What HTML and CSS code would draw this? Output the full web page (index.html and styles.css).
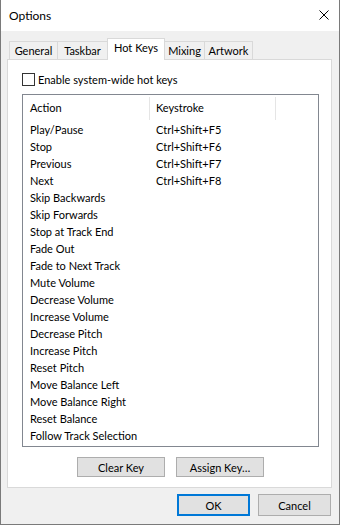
FILE: index.html
```html
<!DOCTYPE html>
<html lang="en">
<head>
    <meta charset="UTF-8">
    <meta name="viewport" content="width=device-width, initial-scale=1.0">
    <title>Options</title>
    <link rel="stylesheet" href="styles.css">
</head>
<body>
    <div class="window">
        <div class="titlebar">
            <span class="title">Options</span>
            <svg class="close" width="10" height="10" viewBox="0 0 10 10">
                <path d="M0.5 0.5 L9.5 9.5 M9.5 0.5 L0.5 9.5" stroke="#000" stroke-width="1" fill="none"/>
            </svg>
        </div>

        <div class="dialog">
            <div class="tabs">
                <div class="tab tab-general">General</div>
                <div class="tab tab-taskbar">Taskbar</div>
                <div class="tab tab-hotkeys active">Hot Keys</div>
                <div class="tab tab-mixing">Mixing</div>
                <div class="tab tab-artwork">Artwork</div>
            </div>

            <div class="panel">
                <label class="check">
                    <span class="check-box"></span>
                    <span>Enable system-wide hot keys</span>
                </label>

                <div class="listview">
                    <div class="lv-header">
                        <div class="lv-col">Action</div>
                        <div class="lv-col">Keystroke</div>
                        <div></div>
                    </div>
                    <div class="lv-rows" id="rows"></div>
                </div>

                <div class="panel-buttons">
                    <button class="btn">Clear Key</button>
                    <button class="btn">Assign Key…</button>
                </div>
            </div>

            <div class="footer">
                <button class="btn btn-dialog default">OK</button>
                <button class="btn btn-dialog">Cancel</button>
            </div>
        </div>
    </div>

    <script>
        const hotkeys = [
            ['Play/Pause', 'Ctrl+Shift+F5'],
            ['Stop', 'Ctrl+Shift+F6'],
            ['Previous', 'Ctrl+Shift+F7'],
            ['Next', 'Ctrl+Shift+F8'],
            ['Skip Backwards', ''],
            ['Skip Forwards', ''],
            ['Stop at Track End', ''],
            ['Fade Out', ''],
            ['Fade to Next Track', ''],
            ['Mute Volume', ''],
            ['Decrease Volume', ''],
            ['Increase Volume', ''],
            ['Decrease Pitch', ''],
            ['Increase Pitch', ''],
            ['Reset Pitch', ''],
            ['Move Balance Left', ''],
            ['Move Balance Right', ''],
            ['Reset Balance', ''],
            ['Follow Track Selection', '']
        ];

        const rows = document.getElementById('rows');
        hotkeys.forEach(([action, key]) => {
            const row = document.createElement('div');
            row.className = 'lv-row';
            row.innerHTML = `<span class="lv-action">${action}</span><span class="lv-key">${key}</span>`;
            rows.appendChild(row);
        });
    </script>
</body>
</html>
```

FILE: styles.css
```css
* {
    box-sizing: border-box;
    margin: 0;
    padding: 0;
}

body {
    font-family: Lato, "Noto Sans", sans-serif;
    font-size: 11px;
    color: #000;
    background: #fff;
}

.window {
    width: 340px;
    height: 525px;
    display: flex;
    flex-direction: column;
    border: 1px solid #7a7a7a;
    border-top: none;
}

.titlebar {
    height: 31px;
    flex-shrink: 0;
    display: flex;
    align-items: center;
    justify-content: space-between;
    padding: 0 10px 1px 8px;
    background: #fff;
}
.title {
    font-size: 12px;
}

.dialog {
    flex: 1;
    background: #f0f0f0;
    padding: 7px 7px 0 6px;
}

/* tab strip */
.tabs {
    display: flex;
    align-items: flex-end;
    height: 21px;
    padding-left: 2px;
}
.tab {
    height: 18px;
    line-height: 17px;
    text-align: center;
    background: #f0f0f0;
    border: 1px solid #d9d9d9;
    border-bottom: none;
    margin-left: -1px;
    white-space: nowrap;
}
.tab:first-child {
    margin-left: 0;
}
.tab-general { width: 49px; }
.tab-taskbar { width: 51px; }
.tab-hotkeys { width: 58px; }
.tab-mixing { width: 41px; }
.tab-artwork { width: 49px; }
.tab.active {
    position: relative;
    z-index: 1;
    height: 22px;
    line-height: 18px;
    margin-bottom: -1px;
    background: #fff;
}

.panel {
    width: 325px;
    height: 429px;
    background: #fff;
    border: 1px solid #d9d9d9;
    padding: 13px 0 0 14px;
}

.check {
    display: flex;
    align-items: center;
    gap: 3px;
    height: 13px;
}
.check-box {
    width: 13px;
    height: 13px;
    border: 1px solid #333;
    background: #fff;
}

/* list view */
.listview {
    margin-top: 8px;
    width: 297px;
    height: 353px;
    border: 1px solid #828790;
    background: #fff;
}
.lv-header {
    display: grid;
    grid-template-columns: 127px 126px 1fr;
    height: 26px;
}
.lv-col {
    margin-top: 2px;
    height: 23px;
    line-height: 22px;
    border-right: 1px solid #e5e5e5;
    padding-left: 7px;
}
.lv-col + .lv-col {
    padding-left: 6px;
}
.lv-row {
    display: grid;
    grid-template-columns: 127px 126px;
    height: 17px;
    line-height: 17px;
    white-space: nowrap;
}
.lv-action {
    padding-left: 7px;
}
.lv-key {
    padding-left: 6px;
}

/* buttons */
.btn {
    font-family: inherit;
    font-size: 11px;
    color: #000;
    background: #e1e1e1;
    border: 1px solid #adadad;
}
.panel-buttons {
    display: flex;
    gap: 11px;
    margin: 10px 0 0 55px;
}
.panel-buttons .btn {
    width: 88px;
    height: 20px;
}

.footer {
    display: flex;
    justify-content: flex-end;
    gap: 8px;
    margin-top: 6px;
    padding-right: 1px;
}
.btn-dialog {
    width: 73px;
    height: 22px;
}
.btn.default {
    border: 2px solid #0078d7;
}
```
